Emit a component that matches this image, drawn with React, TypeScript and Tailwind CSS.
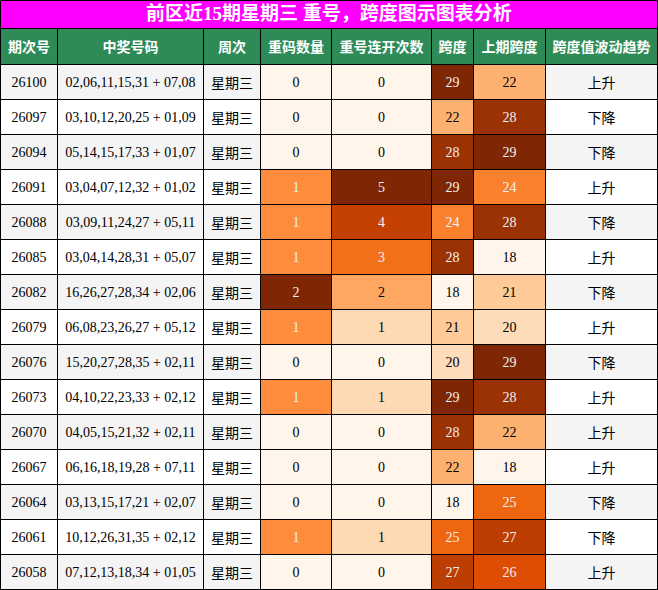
import React from "react";

// Oranges colour scale (colorbrewer, 9 stops)
const ORANGES = [
  "#fff5eb", "#fee6ce", "#fdd0a2", "#fdae6b", "#fd8d3c",
  "#f16913", "#d94801", "#a63603", "#7f2704",
];

function hexToRgb(h: string) {
  const n = parseInt(h.slice(1), 16);
  return [(n >> 16) & 255, (n >> 8) & 255, n & 255];
}

function orange(t: number) {
  const x = Math.max(0, Math.min(1, t)) * (ORANGES.length - 1);
  const i = Math.min(Math.floor(x), ORANGES.length - 2);
  const f = x - i;
  const a = hexToRgb(ORANGES[i]);
  const b = hexToRgb(ORANGES[i + 1]);
  const c = a.map((v, k) => Math.round(v + (b[k] - v) * f));
  // pick text colour from relative luminance
  const lum = c
    .map(v => {
      const s = v / 255;
      return s <= 0.03928 ? s / 12.92 : Math.pow((s + 0.055) / 1.055, 2.4);
    })
    .reduce((acc, v, k) => acc + v * [0.2126, 0.7152, 0.0722][k], 0);
  return {
    bg: `rgb(${c[0]},${c[1]},${c[2]})`,
    fg: lum < 0.408 ? "#f1f1f1" : "#000000",
  };
}

type Row = [string, string, number, number, number, number, string];

const rows: Row[] = [
  ["26100", "02,06,11,15,31 + 07,08", 0, 0, 29, 22, "上升"],
  ["26097", "03,10,12,20,25 + 01,09", 0, 0, 22, 28, "下降"],
  ["26094", "05,14,15,17,33 + 01,07", 0, 0, 28, 29, "下降"],
  ["26091", "03,04,07,12,32 + 01,02", 1, 5, 29, 24, "上升"],
  ["26088", "03,09,11,24,27 + 05,11", 1, 4, 24, 28, "下降"],
  ["26085", "03,04,14,28,31 + 05,07", 1, 3, 28, 18, "上升"],
  ["26082", "16,26,27,28,34 + 02,06", 2, 2, 18, 21, "下降"],
  ["26079", "06,08,23,26,27 + 05,12", 1, 1, 21, 20, "上升"],
  ["26076", "15,20,27,28,35 + 02,11", 0, 0, 20, 29, "下降"],
  ["26073", "04,10,22,23,33 + 02,12", 1, 1, 29, 28, "上升"],
  ["26070", "04,05,15,21,32 + 02,11", 0, 0, 28, 22, "上升"],
  ["26067", "06,16,18,19,28 + 07,11", 0, 0, 22, 18, "上升"],
  ["26064", "03,13,15,17,21 + 02,07", 0, 0, 18, 25, "下降"],
  ["26061", "10,12,26,31,35 + 02,12", 1, 1, 25, 27, "下降"],
  ["26058", "07,12,13,18,34 + 01,05", 0, 0, 27, 26, "上升"],
];

const headers = ["期次号", "中奖号码", "周次", "重码数量", "重号连开次数", "跨度", "上期跨度", "跨度值波动趋势"];

const cell = "h-[35px] flex items-center justify-center border-r border-b border-black text-[14px]";

function Shaded({ value, min, max }: { value: number; min: number; max: number }) {
  const c = orange((value - min) / (max - min));
  return (
    <div className={cell} style={{ backgroundColor: c.bg, color: c.fg }}>
      {value}
    </div>
  );
}

export default function App() {
  return (
    <div
      className="w-[658px] grid grid-cols-[57px_146px_57px_71px_100px_42px_72px_112px] border-l border-t border-black text-black"
      style={{ fontFamily: "'Liberation Serif', 'Noto Sans CJK SC', serif" }}
    >
      <div className="col-span-8 h-[28px] flex items-center justify-center bg-[#ff00ff] border-r border-b border-black text-white font-bold text-[19px]">
        前区近15期星期三 重号，跨度图示图表分析
      </div>
      {headers.map(h => (
        <div
          key={h}
          className="h-[36px] flex items-center justify-center bg-[#2e8b57] border-r border-b border-black text-white font-bold text-[14px]"
          style={{ fontFamily: "'Noto Sans CJK SC', sans-serif" }}
        >
          {h}
        </div>
      ))}
      {rows.map((r, i) => {
        const stripe = i % 2 === 0 ? "bg-[#f4f4f4]" : "bg-white";
        return (
          <React.Fragment key={r[0]}>
            <div className={`${cell} ${stripe}`}>{r[0]}</div>
            <div className={`${cell} ${stripe}`}>{r[1]}</div>
            <div className={`${cell} ${stripe} pt-[2px]`}>{"星期三"}</div>
            <Shaded value={r[2]} min={0} max={2} />
            <Shaded value={r[3]} min={0} max={5} />
            <Shaded value={r[4]} min={18} max={29} />
            <Shaded value={r[5]} min={18} max={29} />
            <div className={`${cell} ${stripe} pt-[2px]`}>{r[6]}</div>
          </React.Fragment>
        );
      })}
    </div>
  );
}
